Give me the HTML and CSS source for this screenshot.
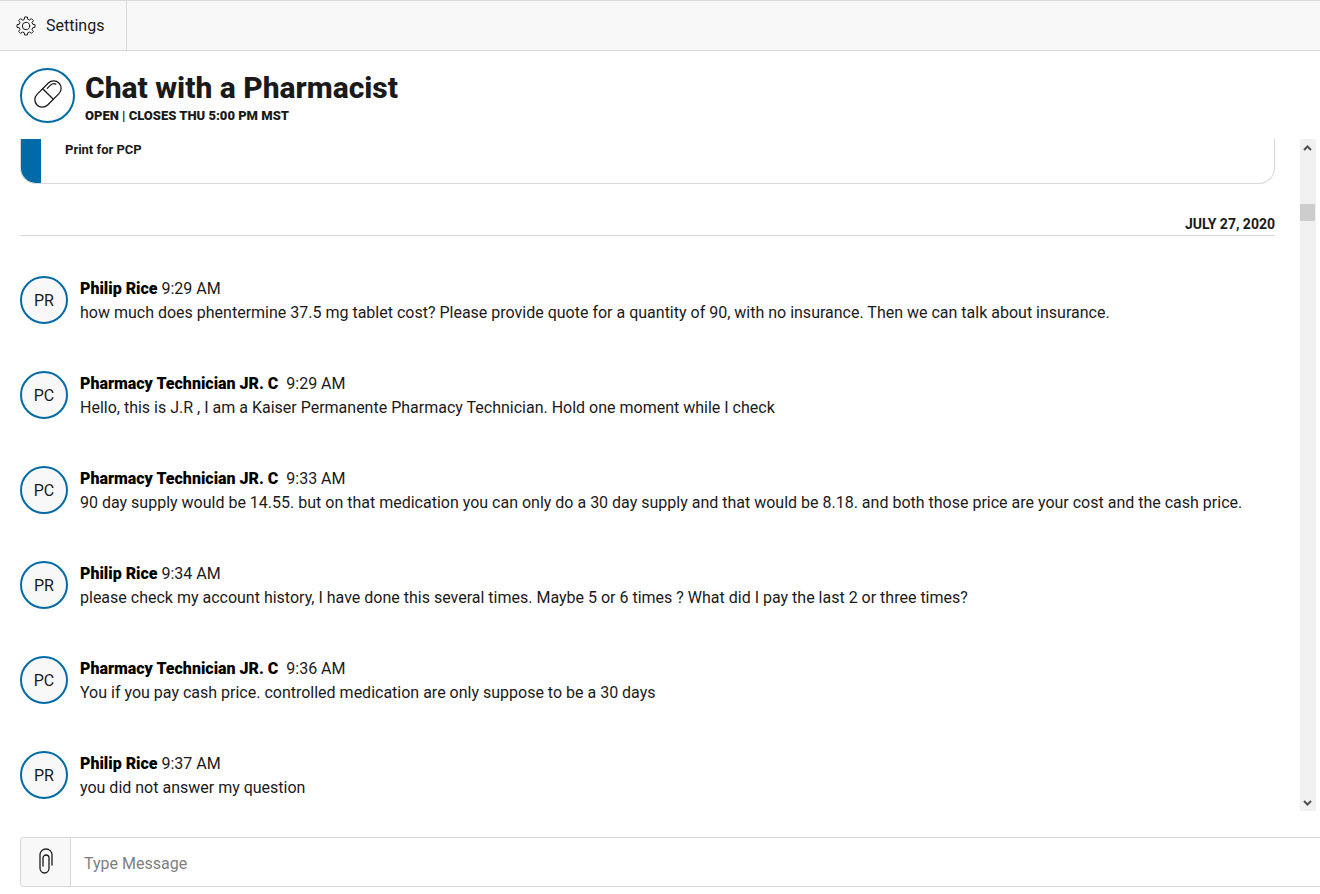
FILE: index.html
```html
<!DOCTYPE html>
<html lang="en">

<head>
    <meta charset="UTF-8">
    <meta name="viewport" content="width=device-width, initial-scale=1.0">
    <title>Chat with a Pharmacist</title>
    <link rel="stylesheet" href="styles.css">
</head>

<body>
    <nav class="toolbar">
        <button type="button" class="settings-button">
            <svg class="gear-icon" viewBox="-12 -12 24 24" aria-hidden="true">
                <path d="M-2.1-8.1L-1.6-10.8H1.6L2.1-8.1L4.2-7.2L6.5-8.8L8.8-6.5L7.2-4.2L8.1-2.1L10.8-1.6V1.6L8.1 2.1L7.2 4.2L8.8 6.5L6.5 8.8L4.2 7.2L2.1 8.1L1.6 10.8H-1.6L-2.1 8.1L-4.2 7.2L-6.5 8.8L-8.8 6.5L-7.2 4.2L-8.1 2.1L-10.8 1.6V-1.6L-8.1-2.1L-7.2-4.2L-8.8-6.5L-6.5-8.8L-4.2-7.2Z" />
                <circle r="4.4" />
            </svg>
            Settings
        </button>
    </nav>

    <header class="chat-header">
        <div class="chat-logo">
            <svg viewBox="0 0 32 32" aria-hidden="true">
                <g transform="rotate(-45 16 16)">
                    <rect x="0.5" y="8.5" width="31" height="15" rx="7.5" />
                    <path d="M16 8.5V23.5M19.5 11.5H24Q27.5 11.5 28.5 14.5" />
                </g>
            </svg>
        </div>
        <div class="chat-title">
            <h1>Chat with a Pharmacist</h1>
            <p class="hours">OPEN | CLOSES THU 5:00 PM MST</p>
        </div>
    </header>

    <main class="chat-area">
        <div class="chat-messages">
            <div class="card">
                <strong>Print for PCP</strong>
            </div>
            <div class="date-divider">JULY 27, 2020</div>

            <div class="message">
                <div class="avatar">PR</div>
                <div class="message-body">
                    <div><span class="name">Philip Rice </span><span class="time">9:29 AM</span></div>
                    <div>how much does phentermine 37.5 mg tablet cost? Please provide quote for a quantity of 90, with no insurance. Then we can talk about insurance.</div>
                </div>
            </div>
            <div class="message">
                <div class="avatar">PC</div>
                <div class="message-body">
                    <div><span class="name">Pharmacy Technician JR. C&nbsp; </span><span class="time">9:29 AM</span></div>
                    <div>Hello, this is J.R , I am a Kaiser Permanente Pharmacy Technician. Hold one moment while I check</div>
                </div>
            </div>
            <div class="message">
                <div class="avatar">PC</div>
                <div class="message-body">
                    <div><span class="name">Pharmacy Technician JR. C&nbsp; </span><span class="time">9:33 AM</span></div>
                    <div>90 day supply would be 14.55. but on that medication you can only do a 30 day supply and that would be 8.18. and both those price are your cost and the cash price.</div>
                </div>
            </div>
            <div class="message">
                <div class="avatar">PR</div>
                <div class="message-body">
                    <div><span class="name">Philip Rice </span><span class="time">9:34 AM</span></div>
                    <div>please check my account history, I have done this several times. Maybe 5 or 6 times ? What did I pay the last 2 or three times?</div>
                </div>
            </div>
            <div class="message">
                <div class="avatar">PC</div>
                <div class="message-body">
                    <div><span class="name">Pharmacy Technician JR. C&nbsp; </span><span class="time">9:36 AM</span></div>
                    <div>You if you pay cash price. controlled medication are only suppose to be a 30 days</div>
                </div>
            </div>
            <div class="message">
                <div class="avatar">PR</div>
                <div class="message-body">
                    <div><span class="name">Philip Rice </span><span class="time">9:37 AM</span></div>
                    <div>you did not answer my question</div>
                </div>
            </div>
        </div>

        <div class="scrollbar">
            <button type="button" aria-label="Scroll up">
                <svg viewBox="0 0 9 6" aria-hidden="true"><path d="M1 5L4.5 1.5L8 5" /></svg>
            </button>
            <div class="scroll-track">
                <div class="scroll-thumb"></div>
            </div>
            <button type="button" aria-label="Scroll down">
                <svg viewBox="0 0 9 6" aria-hidden="true"><path d="M1 1L4.5 4.5L8 1" /></svg>
            </button>
        </div>
    </main>

    <form class="composer">
        <button type="button" class="attach-button" aria-label="Attach file">
            <svg viewBox="0 0 14 26" aria-hidden="true">
                <path d="M13 17V6.5A6 5.5 0 0 0 1 6.5V20A4.5 5 0 0 0 10 20V10A3 3 0 0 0 4 10V18" />
            </svg>
        </button>
        <input type="text" class="message-input" placeholder="Type Message" aria-label="Type Message">
    </form>
</body>

</html>
```
FILE: styles.css
```css
* {
    box-sizing: border-box;
}

body {
    margin: 0;
    min-height: 100vh;
    display: flex;
    flex-direction: column;
    font-family: Roboto, "Liberation Sans", sans-serif;
    font-size: 16px;
    line-height: 24px;
    color: #1a1a1a;
    background-color: #ffffff;
}

button {
    font: inherit;
    color: inherit;
    border: none;
    padding: 0;
    cursor: pointer;
}

svg {
    fill: none;
    stroke: #1a1a1a;
    stroke-linejoin: round;
    stroke-linecap: round;
}

.toolbar {
    display: flex;
    height: 51px;
    background-color: #f8f8f8;
    border-top: 1px solid #d8d8d8;
    border-bottom: 1px solid #d8d8d8;
}

.settings-button {
    display: flex;
    align-items: center;
    gap: 10px;
    padding: 0 22px 0 16px;
    background: none;
    border-right: 1px solid #d8d8d8;
}

.gear-icon {
    width: 20px;
    height: 20px;
    stroke-width: 1.2;
}

.chat-header {
    display: flex;
    gap: 10px;
    padding: 17px 20px 14px;
}

.chat-logo {
    width: 55px;
    height: 55px;
    display: flex;
    align-items: center;
    justify-content: center;
    padding-bottom: 3px;
    border: 2px solid #006ba6;
    border-radius: 50%;
}

.chat-logo svg {
    width: 32px;
    height: 32px;
    stroke-width: 1.3;
}

.chat-title {
    padding-top: 1px;
}

h1 {
    margin: 0;
    font-size: 30px;
    line-height: 38px;
    font-weight: 800;
}

.hours {
    margin: 0;
    font-size: 13px;
    line-height: 18px;
    font-weight: 900;
}

.chat-area {
    flex: 1;
    display: flex;
    gap: 25px;
    padding: 0 4px 0 20px;
}

.chat-messages {
    flex: 1;
}

.card {
    height: 45px;
    padding: 0 20px 0 44px;
    border: 1px solid #d8d8d8;
    border-top: none;
    border-radius: 0 0 16px 16px;
    background: linear-gradient(to right, #006ba6 20px, #ffffff 20px);
    font-size: 13px;
    line-height: 22px;
}

.date-divider {
    margin: 29px 0 40px;
    border-bottom: 1px solid #d8d8d8;
    font-size: 14px;
    line-height: 22px;
    font-weight: 700;
    text-align: right;
}

.message {
    display: flex;
    gap: 12px;
    margin-bottom: 46px;
}

.message:last-child {
    margin-bottom: 0;
}

.message-body {
    padding-top: 1px;
}

.avatar {
    flex-shrink: 0;
    width: 48px;
    height: 48px;
    border: 2px solid #006ba6;
    border-radius: 50%;
    background-color: #f8f8f8;
    line-height: 46px;
    text-align: center;
}

.name {
    font-weight: 900;
    color: #000000;
}

.scrollbar {
    width: 16px;
    display: flex;
    flex-direction: column;
    background-color: #f0f0f0;
}

.scrollbar button {
    width: 15px;
    height: 17px;
    display: flex;
    align-items: center;
    justify-content: center;
    background: none;
}

.scrollbar svg {
    width: 9px;
    height: 6px;
    stroke: #505050;
    stroke-width: 2;
    stroke-linecap: butt;
    stroke-linejoin: miter;
}

.scroll-track {
    flex: 1;
    padding-top: 48px;
}

.scroll-thumb {
    width: 15px;
    height: 17px;
    background-color: #cdcdcd;
}

.composer {
    display: flex;
    height: 50px;
    margin: 26px 0 7px 20px;
    border: 1px solid #d8d8d8;
    border-right: none;
    border-radius: 4px 0 0 4px;
    overflow: hidden;
}

.attach-button {
    width: 50px;
    display: flex;
    align-items: center;
    justify-content: center;
    padding-bottom: 2px;
    background-color: #f8f8f8;
    border-right: 1px solid #d8d8d8;
}

.attach-button svg {
    width: 14px;
    height: 26px;
    stroke-width: 1.3;
}

.message-input {
    flex: 1;
    min-width: 0;
    padding: 4px 13px 0;
    border: none;
    outline: none;
    font: inherit;
    color: inherit;
}

.message-input::placeholder {
    color: #808080;
    opacity: 1;
}
```
